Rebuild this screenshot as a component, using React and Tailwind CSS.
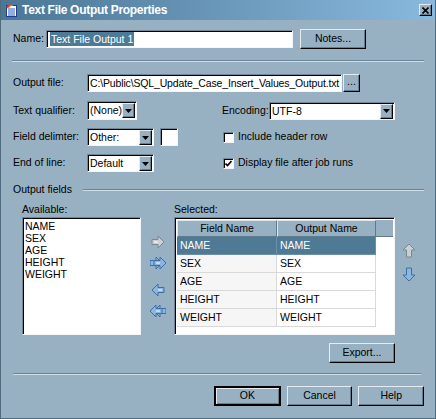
import React from 'react'

const RAISED = 'border border-t-[#e4ecf1] border-l-[#e4ecf1] border-r-black border-b-black shadow-[inset_-1px_-1px_0_#62808f]'
const SUNKEN = 'border border-t-[#6f8797] border-l-[#6f8797] border-r-[#f2f6f8] border-b-[#f2f6f8] shadow-[inset_1px_1px_0_#000]'

function Button({ children, className = '', isDefault }) {
  return (
    <div className={`flex items-center justify-center bg-[#97b1c2] ${isDefault ? 'border-2 border-black shadow-[inset_1px_1px_0_#e4ecf1,inset_-1px_-1px_0_#62808f]' : RAISED} ${className}`}>
      {children}
    </div>
  )
}

function Sep({ className = '' }) {
  return (
    <div className={`border-t border-t-[#6a8597] border-b border-b-[#cfdde6] ${className}`} />
  )
}

function Combo({ value, className = '' }) {
  return (
    <div className={`flex bg-white ${SUNKEN} ${className}`}>
      <div className="flex-1 pl-[2px] leading-[16px] overflow-hidden whitespace-nowrap">{value}</div>
      <div className={`w-[13px] h-[15px] mt-[1px] mr-[1px] flex items-center justify-center bg-[#97b1c2] ${RAISED}`}>
        <svg width="7" height="4" viewBox="0 0 7 4"><path d="M0 0h7L3.5 4z" fill="#000" /></svg>
      </div>
    </div>
  )
}

function Check({ checked, label }) {
  return (
    <div className="flex items-center gap-[4px]">
      <div className={`w-[11px] h-[11px] bg-white ${SUNKEN} flex items-center justify-center`}>
        {checked && (
          <svg width="7" height="7" viewBox="0 0 7 7"><path d="M0.5 3.5l2 2 4-4.5" stroke="#000" strokeWidth="1.6" fill="none" /></svg>
        )}
      </div>
      <span>{label}</span>
    </div>
  )
}

function Arrow({ dir, double, grey }) {
  const fill = grey ? '#c9cfd3' : '#8cb6e0'
  const stroke = grey ? '#7d868c' : '#3c6fa8'
  const one = 'M1 7 L7 1 V4.5 H13 V9.5 H7 V13 Z'
  const rot = { left: 0, right: 180 }[dir]
  return (
    <svg width="16" height="14" viewBox="0 0 16 14">
      <g transform={`rotate(${rot} 8 7)`}>
        {double && <path d={one} transform="translate(3 0)" fill={fill} stroke={stroke} strokeWidth="1" />}
        <path d={one} transform={double ? 'translate(-1 0)' : 'translate(1 0)'} fill={fill} stroke={stroke} strokeWidth="1" />
        <path d={double ? 'M6 7 H10' : 'M8 7 H12'} stroke="#fff" strokeWidth="1" />
      </g>
    </svg>
  )
}

function VArrow({ dir, grey }) {
  const fill = grey ? '#c9cfd3' : '#8cb6e0'
  const stroke = grey ? '#7d868c' : '#3c6fa8'
  return (
    <svg width="14" height="15" viewBox="0 0 14 15">
      <g transform={dir === 'down' ? 'rotate(180 7 7.5)' : ''}>
        <path d="M7 1 L13 7 H9.5 V14 H4.5 V7 H1 Z" fill={fill} stroke={stroke} strokeWidth="1" />
      </g>
    </svg>
  )
}

const FIELDS = ['NAME', 'SEX', 'AGE', 'HEIGHT', 'WEIGHT']

export default function App() {
  return (
    <div className="w-[436px] h-[419px] bg-[#97b1c2] text-[10.5px] text-black font-['Liberation_Sans',Arial,sans-serif] border-x border-b border-[#4f6b7d] flex flex-col overflow-hidden">
      {/* title bar */}
      <div className="h-[20px] flex items-center bg-gradient-to-r from-[#4b7796] to-[#89b9de] pl-[4px] pr-[3px]">
        <svg width="13" height="14" viewBox="0 0 13 14">
          <rect x="1.5" y="2.5" width="10" height="11" fill="#fff" stroke="#1d3f8a" />
          <path d="M3 6h7M3 8h7M3 10h7M3 12h7" stroke="#2a57c8" />
          <path d="M1 4 L5 0.5 L6.5 2 L3 5.5 Z" fill="#e0402a" />
          <path d="M3 5.5 L6.5 2 L7.5 3" stroke="#f1c232" fill="none" />
        </svg>
        <span className="ml-[4px] text-white font-bold text-[12px] tracking-[-0.3px]">Text File Output Properties</span>
        <div className={`ml-auto w-[13px] h-[12px] bg-[#97b1c2] ${RAISED} flex items-center justify-center`}>
          <svg width="7" height="7" viewBox="0 0 7 7"><path d="M0.5 0.5l6 6M6.5 0.5l-6 6" stroke="#000" strokeWidth="1.6" /></svg>
        </div>
      </div>

      <div className="px-[11px] flex flex-col">
        {/* Name */}
        <div className="mt-[9px] h-[20px] flex items-center">
          <span className="w-[34px] pl-[1px]">Name:</span>
          <div className={`w-[247px] h-[18px] bg-white ${SUNKEN} flex items-center pl-[3px]`}>
            <span className="bg-[#4e7a96] text-white leading-[14px] px-[1px]">Text File Output 1</span>
          </div>
          <Button className="ml-[7px] w-[66px] h-[20px]">Notes...</Button>
        </div>

        <Sep className="mt-[11px]" />

        {/* Output file */}
        <div className="mt-[12px] h-[18px] flex items-center">
          <span className="w-[75px] pl-[1px]">Output file:</span>
          <div className={`w-[255px] h-[18px] bg-white ${SUNKEN} pl-[2px] leading-[16px] whitespace-nowrap overflow-hidden tracking-[-0.15px]`}>
            C:\Public\SQL_Update_Case_Insert_Values_Output.txt
          </div>
          <Button className="ml-[1px] w-[17px] h-[18px] pb-[3px]">...</Button>
        </div>

        {/* Text qualifier / Encoding */}
        <div className="mt-[9px] h-[19px] flex items-center">
          <div className="w-[210px] flex items-center">
            <span className="w-[75px] pl-[1px]">Text qualifier:</span>
            <Combo value="(None)" className="w-[50px] h-[19px]" />
          </div>
          <span className="w-[47px]">Encoding:</span>
          <Combo value="UTF-8" className="w-[126px] h-[18px]" />
        </div>

        {/* Field delimiter */}
        <div className="mt-[8px] h-[18px] flex items-center">
          <div className="w-[210px] flex items-center">
            <span className="w-[75px] pl-[1px]">Field delimter:</span>
            <Combo value="Other:" className="w-[67px] h-[18px]" />
            <div className={`ml-[6px] w-[18px] h-[18px] bg-white ${SUNKEN}`} />
          </div>
          <div className="ml-[1px]"><Check label="Include header row" /></div>
        </div>

        {/* End of line */}
        <div className="mt-[8px] h-[18px] flex items-center">
          <div className="w-[210px] flex items-center">
            <span className="w-[75px] pl-[1px]">End of line:</span>
            <Combo value="Default" className="w-[67px] h-[18px]" />
          </div>
          <div className="ml-[1px]"><Check checked label="Display file after job runs" /></div>
        </div>

        {/* Output fields */}
        <div className="mt-[12px] h-[12px] flex items-center">
          <span className="pl-[1px]">Output fields</span>
          <Sep className="ml-[11px] flex-1" />
        </div>

        <div className="mt-[7px] flex pl-[10px]">
          {/* available */}
          <div className="flex flex-col">
            <span className="h-[12px] leading-[12px]">Available:</span>
            <div className={`mt-[2px] w-[119px] h-[118px] bg-white ${SUNKEN} pt-[2px] pl-[2px]`}>
              {FIELDS.map((f) => <div key={f} className="leading-[12px]">{f}</div>)}
            </div>
          </div>

          {/* move arrows */}
          <div className="w-[33px] flex flex-col items-center pt-[32px] pl-[1px]">
            <Arrow dir="right" grey />
            <div className="mt-[7px]"><Arrow dir="right" double /></div>
            <div className="mt-[13px]"><Arrow dir="left" /></div>
            <div className="mt-[7px]"><Arrow dir="left" double /></div>
          </div>

          {/* selected */}
          <div className="flex flex-col">
            <span className="h-[12px] leading-[12px]">Selected:</span>
            <div className={`mt-[2px] w-[221px] h-[118px] bg-white ${SUNKEN} p-[1px] pl-[2px] pt-[2px]`}>
              <div className="flex h-[17px]">
                <div className="w-[100px] bg-[#97b1c2] border border-[#5e7b8c] border-t-[#dce6ec] border-l-[#dce6ec] text-center leading-[15px]">Field Name</div>
                <div className="w-[99px] bg-[#97b1c2] border border-[#5e7b8c] border-t-[#dce6ec] border-l-[#dce6ec] text-center leading-[15px]">Output Name</div>
                <div className="flex-1 bg-[#97b1c2] border-b border-[#5e7b8c]" />
              </div>
              {FIELDS.map((f, i) => (
                <div key={f} className="flex h-[18px]">
                  <div className={`w-[100px] pl-[3px] leading-[17px] border-r border-b ${i === 0 ? 'bg-[#4e7a96] text-white border-[#6d8fa6]' : 'bg-[#f6f6f6] border-[#d9d9d9]'}`}>{f}</div>
                  <div className={`w-[99px] pl-[3px] leading-[17px] border-r border-b ${i === 0 ? 'bg-[#4e7a96] text-white border-[#6d8fa6]' : 'bg-white border-[#d9d9d9]'}`}>{f}</div>
                </div>
              ))}
            </div>
          </div>

          {/* order arrows */}
          <div className="flex flex-col pl-[7px] pt-[40px]">
            <VArrow dir="up" grey />
            <div className="mt-[9px]"><VArrow dir="down" /></div>
          </div>
        </div>

        <div className="mt-[8px] flex pl-[317px]">
          <Button className="w-[66px] h-[20px]">Export...</Button>
        </div>

        <Sep className="mt-[10px] ml-[1px] mr-[3px]" />

        <div className="mt-[11px] flex gap-[6px] pl-[202px]">
          <Button isDefault className="w-[67px] h-[20px]">OK</Button>
          <Button className="w-[66px] h-[20px]">Cancel</Button>
          <Button className="w-[66px] h-[20px]">Help</Button>
        </div>
      </div>
    </div>
  )
}
